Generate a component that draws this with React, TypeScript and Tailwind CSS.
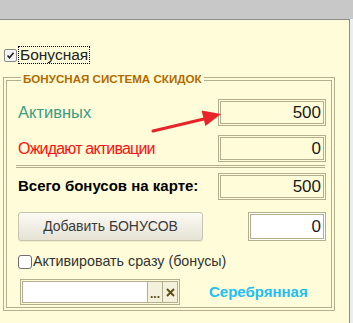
import React from 'react';

export default function App() {
  return (
    <div className="relative flex h-[323px] w-[353px] flex-col overflow-hidden bg-[#fffdd9] font-['Liberation_Sans',Arial,sans-serif]">
      <div className="h-[19px] shrink-0 bg-[#c8c8c8]" />
      <div className="flex min-h-0 flex-1">
        <div className="w-[350px] border-t border-r border-[#8c8c8c] pl-[3px] pt-[26px]">
          {/* Top checkbox */}
          <div className="flex h-[18px] items-center">
            <div className="ml-[1px] flex h-[13px] w-[13px] items-center justify-center rounded-[2px] border border-[#8a8a8a] bg-[#f4f4f4]">
              <svg width="9" height="9" viewBox="0 0 9 9">
                <path d="M1.5 4.5 L3.5 6.8 L7.5 1.8" fill="none" stroke="#222" strokeWidth="1.6" />
              </svg>
            </div>
            <span className="ml-[1px] border border-dotted border-black px-[1px] text-[15.5px] leading-[16px] text-[#222]">
              Бонусная
            </span>
          </div>

          {/* Group box */}
          <fieldset className="mt-[8px] w-[332px] border-[4px] border-double border-[#b5ae8e] pb-[2px] pl-[9px] pr-[5px]">
            <legend className="ml-[5px] px-[2px] text-[11.6px] font-bold leading-[14px] text-[#b36b00]">
              БОНУСНАЯ СИСТЕМА СКИДОК
            </legend>

            <div className="mt-[13px] flex h-[27px] items-center justify-between">
              <span className="ml-[2px] text-[16.5px] text-[#3c9c84]">Активных</span>
              <ValueBox value="500" />
            </div>

            <div className="mt-[9px] flex h-[27px] items-center justify-between">
              <span className="ml-[2px] text-[16px] tracking-[-0.8px] text-[#ff0f0f]">Ожидают активации</span>
              <ValueBox value="0" />
            </div>

            <div className="mr-[1px] mt-[3px] h-[3px] border-y border-[#b5ae8e]" />

            <div className="mt-[5px] flex h-[27px] items-center justify-between">
              <span className="ml-[2px] text-[15px] font-bold text-black">Всего бонусов на карте:</span>
              <ValueBox value="500" />
            </div>

            <div className="mt-[12px] flex h-[29px] items-center justify-between">
              <button className="ml-[2px] h-[29px] w-[185px] rounded-[3px] border border-[#c9c4ad] bg-gradient-to-b from-[#fbfaf4] to-[#e6e3d5] text-[14px] text-[#3a3a3a] shadow-[0_1px_0_rgba(0,0,0,0.08)]">
                Добавить БОНУСОВ
              </button>
              <div className="flex h-[29px] w-[78px] items-center justify-end border-[3px] border-double border-[#b5ae8e] bg-white pr-[2px] text-[17px] text-[#1a1a1a]">
                0
              </div>
            </div>

            <div className="mt-[11px] flex h-[20px] items-center">
              <div className="ml-[2px] h-[14px] w-[14px] rounded-[3px] border border-[#6e6e6e] bg-white" />
              <span className="ml-[1px] text-[14.3px] text-[#333]">Активировать сразу (бонусы)</span>
            </div>

            <div className="mt-[7px] flex h-[26px] items-center">
              <div className="ml-[4px] flex h-[26px] w-[160px] border-[3px] border-double border-[#b5ae8e]">
                <div className="flex-1 bg-white" />
                <div className="flex w-[15px] items-end justify-center border-l border-[#b5ae8e] bg-[#f3f0dc] pb-[3px] text-[12px] font-bold leading-[10px] text-[#5a4a10]">
                  ...
                </div>
                <div className="flex w-[15px] items-center justify-center border-l border-[#b5ae8e] bg-[#f3f0dc]">
                  <svg width="9" height="9" viewBox="0 0 9 9">
                    <path d="M1 1 L8 8 M8 1 L1 8" stroke="#5a4a10" strokeWidth="1.8" />
                  </svg>
                </div>
              </div>
              <span className="ml-[29px] text-[15px] font-bold text-[#22bff2]">Серебрянная</span>
            </div>
          </fieldset>
        </div>
        <div className="w-[3px] bg-[#e9eef3]" />
      </div>

      {/* Red annotation arrow */}
      <svg className="pointer-events-none absolute left-0 top-0" width="353" height="323">
        <line x1="153" y1="131" x2="206" y2="118.5" stroke="#e8242a" strokeWidth="3" strokeLinecap="round" />
        <polygon points="221,114 201.6,110.4 205.4,126" fill="#e8242a" />
      </svg>
    </div>
  );
}

function ValueBox({ value }: { value: string }) {
  return (
    <div className="flex h-[27px] w-[108px] items-center justify-end border-[3px] border-double border-[#b5ae8e] pr-[2px] text-[17px] text-[#1a1a1a]">
      {value}
    </div>
  );
}
